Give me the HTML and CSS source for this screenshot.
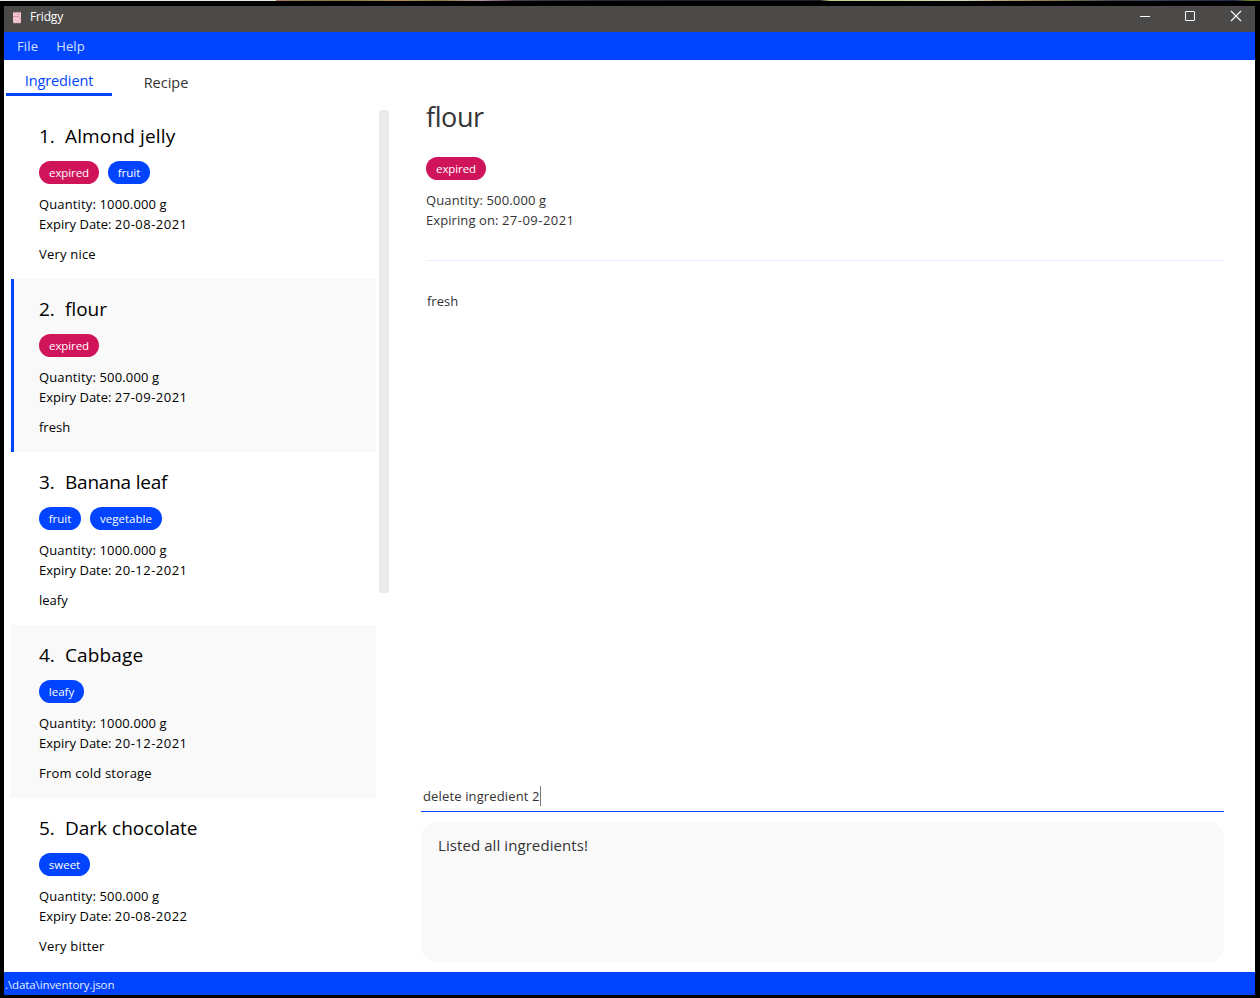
FILE: index.html
```html
<!DOCTYPE html>
<html lang="en">
<head>
<meta charset="utf-8">
<title>Fridgy</title>
<link rel="stylesheet" href="styles.css">
</head>
<body>
<div class="desktop-strip"></div>
<div class="window">
  <header class="titlebar">
    <svg class="app-icon" width="10" height="13" viewBox="0 0 10 13"><rect x="1" y="1" width="8" height="11" rx="1" fill="#f7c3d0"/><path d="M1.5 1h7M1.5 12.4h7" stroke="#74656a" fill="none"/><path d="M1 5.5h6M5 3.5h3M7.5 6v2" stroke="#c893a5" stroke-width=".8" fill="none"/></svg>
    <span class="app-name">Fridgy</span>
    <div class="controls">
      <svg width="12" height="12" viewBox="0 0 12 12"><path d="M1 6.5h10" stroke="#fff"/></svg>
      <svg width="12" height="12" viewBox="0 0 12 12"><rect x="1.5" y="1.5" width="9" height="9" rx=".5" fill="none" stroke="#fff"/></svg>
      <svg width="12" height="12" viewBox="0 0 12 12"><path d="M1 1l10 10M11 1L1 11" stroke="#fff" stroke-width="1.1"/></svg>
    </div>
  </header>
  <nav class="menubar"><span class="menu-file">File</span><span class="menu-help">Help</span></nav>
  <main class="content">
    <section class="side">
      <div class="tabs"><span class="tab active">Ingredient</span><span class="tab">Recipe</span></div>
      <div class="list-area">
        <div class="list">
          <article class="card"><h2><span>1.</span><span class="almond">Almond jelly</span></h2><div class="tags"><span class="tag expired">expired</span><span class="tag fruit">fruit</span></div><p class="qty">Quantity: 1000.000 g</p><p class="date">Expiry Date: <span class="day">20-08-2021</span></p><p class="note">Very nice</p></article>
          <article class="card alt selected"><h2><span>2.</span><span>flour</span></h2><div class="tags"><span class="tag expired">expired</span></div><p class="qty">Quantity: 500.000 g</p><p class="date">Expiry Date: <span class="day">27-09-2021</span></p><p class="note short">fresh</p></article>
          <article class="card"><h2><span>3.</span><span class="banana">Banana leaf</span></h2><div class="tags"><span class="tag fruit">fruit</span><span class="tag vegetable">vegetable</span></div><p class="qty">Quantity: 1000.000 g</p><p class="date">Expiry Date: <span class="day">20-12-2021</span></p><p class="note short">leafy</p></article>
          <article class="card alt"><h2><span>4.</span><span class="cabbage">Cabbage</span></h2><div class="tags"><span class="tag leafy">leafy</span></div><p class="qty">Quantity: 1000.000 g</p><p class="date">Expiry Date: <span class="day">20-12-2021</span></p><p class="note">From cold storage</p></article>
          <article class="card"><h2><span>5.</span><span>Dark chocolate</span></h2><div class="tags"><span class="tag sweet">sweet</span></div><p class="qty">Quantity: 500.000 g</p><p class="date">Expiry Date: <span class="day">20-08-2022</span></p><p class="note">Very bitter</p></article>
        </div>
        <div class="scrollbar"></div>
      </div>
    </section>
    <section class="detail">
      <div class="info">
        <h1>flour</h1>
        <div class="tags"><span class="tag expired">expired</span></div>
        <p class="qty">Quantity: 500.000 g</p>
        <p class="date">Expiring on: <span class="day">27-09-2021</span></p>
        <hr>
        <p class="desc">fresh</p>
      </div>
      <div class="command"><span class="cmd-text">delete ingredient 2</span><span class="caret"></span></div>
      <div class="result"><span>Listed all ingredients!</span></div>
    </section>
  </main>
  <footer class="statusbar"><span>.\data\inventory.json</span></footer>
</div>
</body>
</html>
```
FILE: styles.css
```css
* { box-sizing: border-box; }
body { margin: 0; width: 1260px; height: 998px; background: #000; overflow: hidden; font-family: "Open Sans", "Noto Sans", sans-serif; font-size: 13px; color: #000; }
h1, h2, p { margin: 0; font-weight: 400; }
span { white-space: nowrap; }
.desktop-strip { height: 1px; background: linear-gradient(90deg, #e4ebe2 0 276px, #a67e68 276px, #8a7b3a 340px, #b58f58 400px, #8b8040 440px, #b795a8 480px, #4b3b52 515px, #2a2634 600px, #1c1c28 820px, #c9ca80 830px, #d8e2c0 960px, #b79a70 1010px, #77724b 1070px, #454857 1110px, #1c2c4a 1235px, #718322 1250px); }
.window { margin: 5px 5px 0 4px; height: 989px; display: flex; flex-direction: column; background: #fff; }
.titlebar { height: 26px; background: #4c4a48; display: flex; color: #fff; padding: 0 13px 0 8px; }
.app-icon { margin-top: 5px; }
.app-name { margin-left: 8px; font-size: 12px; line-height: 22px; letter-spacing: -0.15px; }
.controls { margin-left: auto; display: flex; gap: 33px; padding-top: 4px; }
.controls svg:last-child { margin-left: 1px; }
.menubar { height: 28px; background: #0044ff; color: #d6e0ff; display: flex; gap: 18px; padding-left: 13px; line-height: 29px; letter-spacing: 0.15px; }
.content { height: 912px; display: flex; }
.side { width: 386px; padding-left: 2px; display: flex; flex-direction: column; }
.tabs { height: 36px; display: flex; font-size: 14.5px; }
.tab { width: 106px; height: 36px; text-align: center; line-height: 45px; color: #333; }
.tab + .tab { margin-left: 1px; }
.tab.active { color: #0044ff; line-height: 41px; border-bottom: 3px solid #0044ff; letter-spacing: -0.1px; }
.list-area { display: flex; padding: 14px 0 0 5px; gap: 3px; }
.list { width: 365px; }
.card { height: 173px; padding: 18px 0 0 28px; }
.card:first-child { height: 169px; padding-top: 14px; }
.card.alt { background: #f9f9f9; }
.card.selected { border-left: 3px solid #0044ff; padding-left: 25px; }
.card h2 { height: 24px; line-height: 24px; font-size: 19px; display: flex; }
.card h2 span:first-child { width: 26px; }
.card h2 .almond, .card h2 .cabbage { letter-spacing: 0.15px; }
.card h2 .banana { letter-spacing: -0.22px; }
.tags { display: flex; gap: 9px; }
.card .tags { margin-top: 13px; }
.tag { height: 23px; border-radius: 12px; background: #0044ff; color: #fff; font-size: 11.5px; line-height: 23px; text-align: center; }
.tag.expired { background: #d0145a; width: 60px; letter-spacing: -0.1px; }
.tag.fruit { width: 42px; }
.tag.vegetable { width: 72px; }
.tag.leafy { width: 45px; }
.tag.sweet { width: 51px; }
.qty, .date, .note { height: 20px; line-height: 20px; }
.qty { margin-top: 10px; letter-spacing: 0.14px; }
.day { letter-spacing: 0.48px; }
.info .date { letter-spacing: 0.08px; }
.note { margin-top: 10px; letter-spacing: 0.2px; }
.note.short { letter-spacing: 0; }
.scrollbar { width: 10px; height: 483px; border-radius: 3px; background: #eaeaea; }
.detail { flex: 1; padding: 0 31px 0 31px; display: flex; flex-direction: column; color: #333; }
.info { height: 721px; padding: 40px 0 0 5px; }
h1 { font-size: 27px; line-height: 34px; height: 34px; letter-spacing: -0.4px; }
.info .tags { margin-top: 23px; }
.info hr { border: 0; height: 1px; background: #e9efff; margin: 30px 0 0; }
.desc { margin: 30px 0 0 1px; line-height: 20px; }
.command { height: 31px; border-bottom: 1px solid #0044ff; display: flex; padding-left: 2px; line-height: 30px; letter-spacing: 0.14px; }
.caret { width: 1px; height: 20px; margin-top: 5px; background: #777; }
.result { height: 140px; margin-top: 10px; border-radius: 15px; background: #f9f9f9; padding: 12px 17px; font-size: 15px; line-height: 22px; letter-spacing: 0.08px; }
.statusbar { height: 23px; background: #0044ff; color: #e6ecff; font-size: 11.5px; line-height: 25px; padding-left: 1px; letter-spacing: -0.1px; }
```
